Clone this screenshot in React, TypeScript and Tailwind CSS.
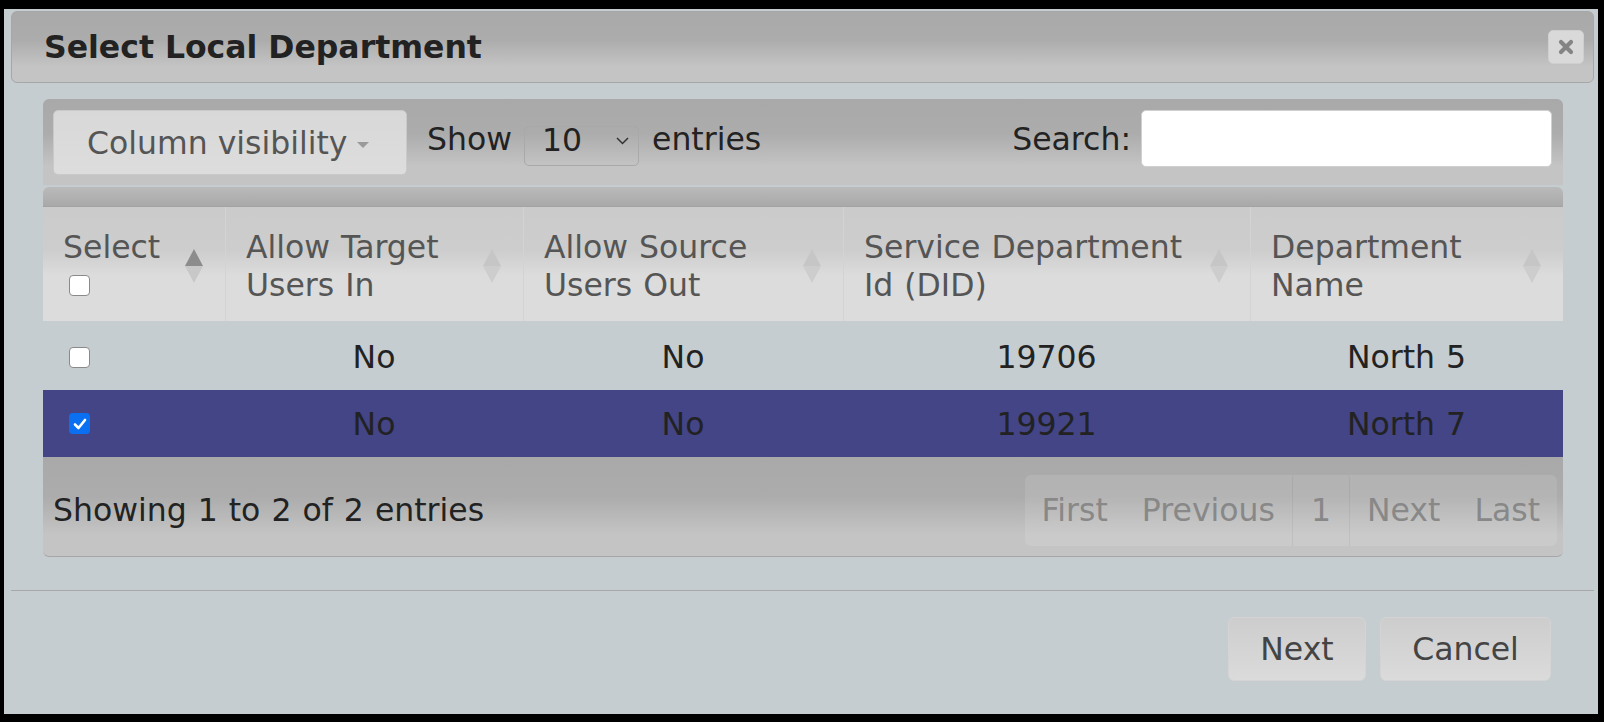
import * as React from "react";

// gradients shared by the jQuery-UI style header bars
const barBg =
  "bg-[linear-gradient(to_bottom,#a9a9a9_0%,#acacac_40%,#c4c4c4_78%,#c4c4c4_100%)]";
const headBg =
  "bg-[linear-gradient(to_bottom,#cbcbcb_0%,#cdcdcd_38%,#dcdcdc_60%,#dcdcdc_100%)]";

type Column = { lines: string[]; width: string; active?: boolean };

const columns: Column[] = [
  { lines: ["Select"], width: "w-[182px]", active: true },
  { lines: ["Allow Target", "Users In"], width: "w-[298px]" },
  { lines: ["Allow Source", "Users Out"], width: "w-[320px]" },
  { lines: ["Service Department", "Id (DID)"], width: "w-[407px]" },
  { lines: ["Department", "Name"], width: "w-[313px]" },
];

const rows = [
  { checked: false, target: "No", source: "No", did: "19706", name: "North 5" },
  { checked: true, target: "No", source: "No", did: "19921", name: "North 7" },
];

function Checkbox({ checked }: { checked?: boolean }) {
  if (checked) {
    return (
      <span className="flex size-[21px] items-center justify-center rounded-[4px] bg-[#0b6ff2]">
        <svg width="14" height="12" viewBox="0 0 14 12">
          <path
            d="M2 6.5 L5.5 10 L12 2"
            fill="none"
            stroke="#fff"
            strokeWidth="2.6"
            strokeLinecap="round"
            strokeLinejoin="round"
          />
        </svg>
      </span>
    );
  }
  return (
    <span className="block size-[21px] rounded-[4px] border border-[#8a8a8a] bg-white" />
  );
}

function SortIcon({ active }: { active?: boolean }) {
  return (
    <svg width="18" height="34" viewBox="0 0 18 34" className="shrink-0">
      <path d="M9 0 L18 17 L0 17 Z" fill={active ? "#8c8c8c" : "#c6c6c6"} />
      <path d="M0 17 L18 17 L9 34 Z" fill={active ? "#c8c8c8" : "#cdcdcd"} />
    </svg>
  );
}

export default function App() {
  return (
    <div className="h-[722px] w-[1604px] overflow-hidden bg-black pl-[4px] pt-[9px] font-['DejaVu_Sans',sans-serif] text-[31.5px] leading-[38px] text-[#222] [word-spacing:1px]">
      <div className="flex h-[705px] w-[1594px] flex-col bg-[#c5cdd0] pl-[7px] pr-[4px] pt-[2px]">
        {/* Title bar */}
        <div
          className={`flex h-[72px] items-center justify-between rounded-[6px] border border-[#a7a7a7] pl-[32px] pr-[9px] ${barBg}`}
        >
          <span className="font-bold text-[#222] [word-spacing:0px]">
            Select Local Department
          </span>
          <button className="flex h-[34px] w-[36px] items-center justify-center rounded-[5px] border border-[#cfcfcf] bg-[#d9d9d9]">
            <svg width="16" height="16" viewBox="0 0 16 16">
              <path
                d="M3 3 L13 13 M13 3 L3 13"
                stroke="#848484"
                strokeWidth="4.2"
                strokeLinecap="round"
              />
            </svg>
          </button>
        </div>

        {/* Table wrapper */}
        <div className="ml-[32px] mr-[31px] mt-[16px]">
          {/* Top toolbar */}
          <div
            className={`flex h-[86px] items-center rounded-t-[6px] pl-[10px] pr-[11px] pt-[1px] ${barBg}`}
          >
            <button className="flex h-[65px] w-[354px] items-center rounded-[5px] border border-[#c9c9c9] bg-[linear-gradient(to_bottom,#d8d8d8,#dddddd)] pl-[33px] text-[#555]">
              Column visibility
              <svg width="12" height="6" viewBox="0 0 12 6" className="ml-[10px] mt-[4px]">
                <path d="M0 0 L12 0 L6 6 Z" fill="#9a9a9a" />
              </svg>
            </button>
            <span className="mb-[7px] ml-[20px]">Show</span>
            <div className="ml-[12px] mt-[6px] flex h-[40px] w-[115px] items-center rounded-[5px] border border-[#a9a9a9] pl-[17px] pr-[9px]">
              <span className="mb-[12px]">10</span>
              <svg width="13" height="8" viewBox="0 0 13 8" className="mb-[9px] ml-auto">
                <path
                  d="M1 1 L6.5 6.5 L12 1"
                  fill="none"
                  stroke="#333"
                  strokeWidth="1.5"
                />
              </svg>
            </div>
            <span className="mb-[7px] ml-[13px]">entries</span>
            <span className="mb-[7px] ml-auto">Search:</span>
            <input
              type="text"
              className="ml-[10px] mt-[10px] h-[57px] w-[411px] self-start rounded-[5px] border border-[#d0d0d0] bg-white outline-none"
            />
          </div>

          {/* Scroll head bar */}
          <div className="mt-[2px] h-[20px] rounded-t-[6px] border-b border-[#a3a3a3] bg-[linear-gradient(to_bottom,#bababa,#a9a9a9)]" />

          {/* Column headers */}
          <div className={`flex h-[114px] text-[#555] ${headBg}`}>
            {columns.map((col, i) => (
              <div
                key={i}
                className={`flex items-center pl-[20px] pr-[22px] pt-[4px] ${col.width} ${
                  i > 0 ? "border-l border-[#d3d3d3]" : ""
                }`}
              >
                <div className="flex flex-col">
                  {col.lines.map((l) => (
                    <span key={l} className="whitespace-nowrap">
                      {l}
                    </span>
                  ))}
                  {i === 0 && (
                    <span className="ml-[6px] flex h-[38px] items-center">
                      <Checkbox />
                    </span>
                  )}
                </div>
                <span className="ml-auto">
                  <SortIcon active={col.active} />
                </span>
              </div>
            ))}
          </div>

          {/* Body rows */}
          {rows.map((r, i) => (
            <div
              key={r.did}
              className={`flex items-center ${
                r.checked ? "h-[67px] bg-[#434587]" : "h-[69px]"
              } ${i === 0 ? "pt-[3px]" : ""}`}
            >
              <div className="w-[182px] pl-[26px]">
                <Checkbox checked={r.checked} />
              </div>
              <div className="w-[298px] text-center">{r.target}</div>
              <div className="w-[320px] text-center">{r.source}</div>
              <div className="w-[407px] text-center">{r.did}</div>
              <div className="w-[313px] text-center">{r.name}</div>
            </div>
          ))}

          {/* Bottom toolbar */}
          <div
            className={`flex h-[100px] items-center rounded-b-[6px] border-b border-[#a6a6a6] pl-[10px] pr-[6px] pt-[7px] ${barBg}`}
          >
            <span>Showing 1 to 2 of 2 entries</span>
            <div className="ml-auto flex h-[71px] items-center rounded-[6px] bg-white/10 text-[#888]">
              <span className="px-[17px]">First</span>
              <span className="px-[17px]">Previous</span>
              <span className="flex h-full items-center rounded-t-[4px] border-x border-black/5 px-[18px]">
                1
              </span>
              <span className="px-[17px]">Next</span>
              <span className="px-[17px]">Last</span>
            </div>
          </div>
        </div>

        {/* Dialog button pane */}
        <div className="mt-[33px] border-t border-[#a8a8a8]">
          <div className="mr-[43px] mt-[26px] flex justify-end gap-[14px] text-[#444]">
            <button className="h-[64px] w-[138px] rounded-[6px] border border-[#d4d4d4] bg-[linear-gradient(to_bottom,#cdcdcd,#dbdbdb)]">
              Next
            </button>
            <button className="h-[64px] w-[171px] rounded-[6px] border border-[#d4d4d4] bg-[linear-gradient(to_bottom,#cdcdcd,#dbdbdb)]">
              Cancel
            </button>
          </div>
        </div>
      </div>
    </div>
  );
}
